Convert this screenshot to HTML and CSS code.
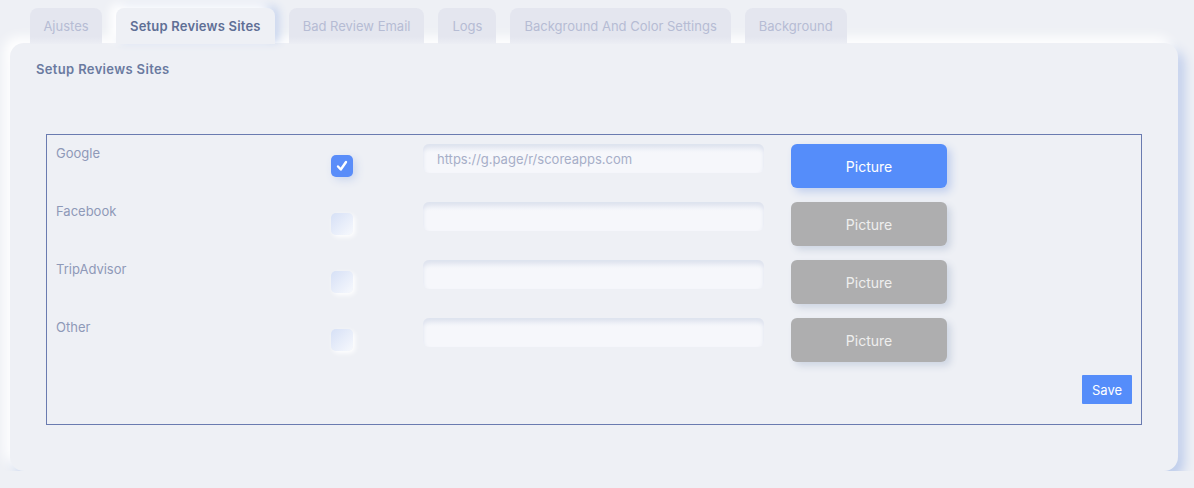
FILE: index.html
```html
<!DOCTYPE html>
<html>
<head>
  <title>Setup Reviews Sites</title>
  <link rel="stylesheet" href="styles.css">
</head>
<body>
  <div class="tabs">
    <div class="tab first">Ajustes</div>
    <div class="tab active">Setup Reviews Sites</div>
    <div class="tab">Bad Review Email</div>
    <div class="tab">Logs</div>
    <div class="tab">Background And Color Settings</div>
    <div class="tab">Background</div>
  </div>

  <div class="panel">
    <h2 class="panel-title">Setup Reviews Sites</h2>

    <div class="sites-box">
      <div class="site-row">
        <label class="site-name">Google</label>
        <span class="check checked">
          <svg width="14" height="14" viewBox="0 0 14 14"><path d="M3 7.5 L5.8 10.5 L11 3" fill="none" stroke="#ffffff" stroke-width="2.4" stroke-linecap="round" stroke-linejoin="round"/></svg>
        </span>
        <input type="text" class="site-url" value="https://g.page/r/scoreapps.com">
        <button class="picture-btn on">Picture</button>
      </div>
      <div class="site-row">
        <label class="site-name">Facebook</label>
        <span class="check"></span>
        <input type="text" class="site-url" value="">
        <button class="picture-btn">Picture</button>
      </div>
      <div class="site-row">
        <label class="site-name">TripAdvisor</label>
        <span class="check"></span>
        <input type="text" class="site-url" value="">
        <button class="picture-btn">Picture</button>
      </div>
      <div class="site-row">
        <label class="site-name">Other</label>
        <span class="check"></span>
        <input type="text" class="site-url" value="">
        <button class="picture-btn">Picture</button>
      </div>
      <div class="save-row">
        <button class="save-btn">Save</button>
      </div>
    </div>
  </div>
</body>
</html>
```

FILE: styles.css
```css
body {
  margin: 0;
  padding: 8px 16px 0 10px;
  background-color: #eef0f5;
  font-family: Inter, "Noto Sans", sans-serif;
}

.tabs {
  display: flex;
  gap: 14px;
  padding-left: 20px;
  height: 36px;
}

.tab {
  padding: 0 14px;
  line-height: 36px;
  font-size: 13px;
  color: #b6bcd4;
  background: linear-gradient(#e4e6ef, #e4e6ef 80%, #eceef4);
  border-radius: 8px 8px 0 0;
}

.tab.first {
  width: 72px;
  box-sizing: border-box;
  padding: 0;
  text-align: center;
}

.tab.active {
  color: #5f6f95;
  font-weight: 600;
  letter-spacing: 0.2px;
  background: #eef0f5;
  box-shadow: -6px -4px 10px #ffffff, 4px -2px 8px #c7d4ee;
  position: relative;
  z-index: 1;
}

.panel {
  height: 428px;
  box-sizing: border-box;
  margin-top: -1px;
  padding: 17px 36px 0 26px;
  background-color: #eef0f5;
  border-radius: 14px;
  box-shadow: -6px -6px 12px #ffffff, 6px 7px 12px #bccbeb;
}

.panel-title {
  margin: 0;
  font-size: 13px;
  font-weight: 600;
  letter-spacing: 0.35px;
  color: #6a7aa0;
  line-height: 18px;
}

.sites-box {
  margin-top: 56px;
  margin-left: 10px;
  height: 291px;
  box-sizing: border-box;
  border: 1px solid #6a7bb0;
  padding: 9px 9px 0 9px;
}

.site-row {
  display: grid;
  grid-template-columns: 275px 92px 368px 156px;
  height: 44px;
  margin-bottom: 14px;
}

.site-name {
  font-size: 13px;
  color: #8e99b8;
  padding-top: 1px;
  line-height: 16px;
}

.check {
  align-self: center;
  display: flex;
  align-items: center;
  justify-content: center;
  width: 22px;
  height: 22px;
  border-radius: 5px;
  background: linear-gradient(135deg, #d6e0f6, #f7f9fd);
  box-shadow: 2px 2px 5px #ffffff;
}

.check.checked {
  background: #5a8df9;
  box-shadow: 3px 3px 8px #cbd6ee;
}

.site-url {
  width: 341px;
  height: 29px;
  box-sizing: border-box;
  border: none;
  outline: none;
  border-radius: 6px;
  padding: 0 14px;
  font-family: Inter, "Noto Sans", sans-serif;
  font-size: 13px;
  color: #a6aec8;
  background: linear-gradient(#e9ecf3, #f6f7fb 30%, #f6f7fb);
  box-shadow: inset 0 3px 4px #dde2ee;
}

.picture-btn {
  height: 44px;
  border: none;
  border-radius: 6px;
  font-family: Inter, "Noto Sans", sans-serif;
  font-size: 14px;
  color: #eeeeee;
  background-color: #aeaeaf;
  box-shadow: 4px 4px 7px #cfd6e3;
}

.picture-btn.on {
  color: #ffffff;
  background-color: #558dfa;
  box-shadow: 4px 4px 8px #c1cfee;
}

.save-row {
  display: flex;
  justify-content: flex-end;
  margin-top: -1px;
}

.save-btn {
  width: 50px;
  height: 29px;
  border: none;
  border-radius: 1px;
  font-family: Inter, "Noto Sans", sans-serif;
  font-size: 13px;
  color: #ffffff;
  background-color: #558dfa;
}
```
